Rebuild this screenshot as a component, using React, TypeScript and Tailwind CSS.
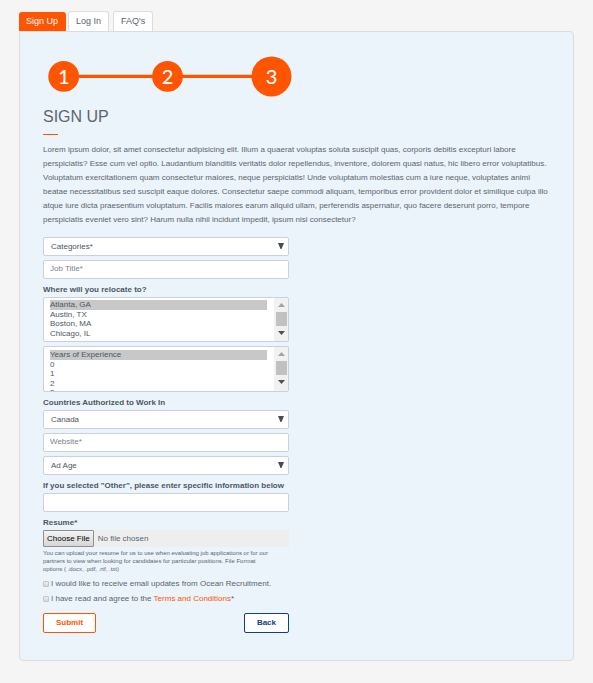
import { useId, type ReactNode } from "react";

const fieldBox =
  "block w-full rounded-[2px] border border-[#c8d1dc] bg-white text-[8px] text-[#4d5763] outline-none focus:border-[#ff5500]";

function Label({ htmlFor, children }: { htmlFor: string; children: ReactNode }) {
  return (
    <label htmlFor={htmlFor} className="mt-[5px] mb-px block text-[8px] leading-3 font-bold text-[#4d5763]">
      {children}
    </label>
  );
}

function Dropdown({ id, label, options }: { id?: string; label?: string; options: string[] }) {
  return (
    <div className="relative">
      <select id={id} aria-label={label} className={`${fieldBox} h-[19px] appearance-none pl-[7px] pr-5`}>
        {options.map((option) => (
          <option key={option}>{option}</option>
        ))}
      </select>
      <svg viewBox="0 0 6 6" className="pointer-events-none absolute top-[6px] right-[5px] size-[6px]" aria-hidden="true">
        <path d="M0 0H6L3.5 6H2.5Z" fill="#444c54" />
      </svg>
    </div>
  );
}

function TextField({ id, label, placeholder }: { id?: string; label?: string; placeholder?: string }) {
  return (
    <input
      id={id}
      type="text"
      aria-label={label}
      placeholder={placeholder}
      className={`${fieldBox} h-[19px] px-[6px] pb-[2px] placeholder:text-[#7b838c]`}
    />
  );
}

function ListBox({
  id,
  label,
  options,
  className,
}: {
  id?: string;
  label?: string;
  options: string[];
  className: string;
}) {
  return (
    <div className="flex w-full overflow-hidden rounded-[2px] border border-[#c8d1dc] bg-white">
      <select
        id={id}
        aria-label={label}
        multiple
        size={4}
        defaultValue={[options[0]]}
        className={`${className} min-w-0 flex-1 overflow-y-auto bg-transparent pr-[7px] pl-[6px] text-[8px] text-[#4d5763] outline-none [scrollbar-width:none]`}
      >
        {options.map((option) => (
          <option
            key={option}
            className="p-0 [-webkit-text-fill-color:#4d5763] checked:bg-[linear-gradient(#c8c8c8,#c8c8c8)]"
          >
            {option}
          </option>
        ))}
      </select>
      <div className="flex w-[14px] flex-col items-center bg-[#f1f1f1] pt-[5px]" aria-hidden="true">
        <svg viewBox="0 0 7 4" className="h-1 w-[7px]">
          <path d="M3.5 0L7 4H0Z" fill="#a3a3a3" />
        </svg>
        <div className="mt-[5px] h-[14px] w-[11px] bg-[#c1c1c1]" />
        <svg viewBox="0 0 7 4" className="mt-[5px] h-1 w-[7px]">
          <path d="M0 0H7L3.5 4Z" fill="#505050" />
        </svg>
      </div>
    </div>
  );
}

function CheckRow({ children }: { children: ReactNode }) {
  const id = useId();
  return (
    <div className="flex items-center gap-[2px] text-[8px] leading-[15px] text-[#5b6570]">
      <input
        id={id}
        type="checkbox"
        className="size-[6px] appearance-none rounded-[1px] border border-[#c3c6ca] bg-linear-to-b from-[#eeeeee] to-[#d5d5d5] checked:bg-[#ff5500] checked:bg-none"
      />
      <label htmlFor={id}>{children}</label>
    </div>
  );
}

function Steps() {
  return (
    <svg viewBox="0 0 244 42" className="ml-[5px] block h-[42px] w-[244px]" role="img" aria-label="Step 3 of 3">
      <path d="M16 20.4H224" stroke="#ff5500" strokeWidth="3.3" />
      <circle cx="15.7" cy="20.4" r="15.4" fill="#ff5500" />
      <circle cx="119.5" cy="20.4" r="15.4" fill="#ff5500" />
      <circle cx="223.5" cy="20.4" r="20" fill="#ff5500" />
      <g fill="#fff" stroke="#fff" strokeWidth="0.1" textAnchor="middle" className="font-['Lato',sans-serif] text-[20px]">
        <text x="15.7" y="27.6">1</text>
        <text x="119.5" y="27.6">2</text>
        <text x="223.5" y="27.6">3</text>
      </g>
    </svg>
  );
}

const tab = "rounded-t-[3px] text-[9px]";
const idleTab = "h-5 border border-b-0 border-[#dddddd] bg-white px-[7px] text-[#5b6570]";

export default function App() {
  return (
    <div className="min-h-screen bg-[#f5f5f5] px-[19px] pt-[11px] pb-[22px] font-['Liberation_Sans',Arial,sans-serif]">
      <nav className="flex items-end">
        <button type="button" className={`${tab} mr-[2px] h-[19px] bg-[#ff5500] pr-2 pl-[7px] text-white`}>
          Sign Up
        </button>
        <button type="button" className={`${tab} ${idleTab} mr-1`}>
          Log In
        </button>
        <button type="button" className={`${tab} ${idleTab}`}>
          FAQ's
        </button>
      </nav>

      <main className="rounded-b-[4px] rounded-tr-[4px] border border-[#dcdcdc] bg-[#ebf3fb] px-[23px] pt-6 pb-[27px]">
        <Steps />
        <h1 className="mt-2 text-[16px] leading-[22px] text-[#5b6570]">SIGN UP</h1>
        <div className="mt-[6px] h-px w-[15px] bg-[#ff5500]" />
        <p className="mt-2 text-[8px] leading-[14px] text-[#5b6570]">
          Lorem ipsum dolor, sit amet consectetur adipisicing elit. Illum a quaerat voluptas soluta suscipit quas,
          corporis debitis excepturi labore perspiciatis? Esse cum vel optio. Laudantium blanditiis veritatis dolor
          repellendus, inventore, dolorem quasi natus, hic libero error voluptatibus. Voluptatum exercitationem quam
          consectetur maiores, neque perspiciatis! Unde voluptatum molestias cum a iure neque, voluptates animi beatae
          necessitatibus sed suscipit eaque dolores. Consectetur saepe commodi aliquam, temporibus error provident
          dolor et similique culpa illo atque iure dicta praesentium voluptatum. Facilis maiores earum aliquid ullam,
          perferendis aspernatur, quo facere deserunt porro, tempore perspiciatis eveniet vero sint? Harum nulla nihil
          incidunt impedit, ipsum nisi consectetur?
        </p>

        <form className="mt-[10px] w-full max-w-[246px]" onSubmit={(event) => event.preventDefault()}>
          <div className="flex flex-col gap-1">
            <Dropdown label="Categories" options={["Categories*", "Engineering", "Marketing", "Sales"]} />
            <TextField label="Job Title" placeholder="Job Title*" />
          </div>

          <Label htmlFor="relocate">Where will you relocate to?</Label>
          <div className="flex flex-col gap-1">
            <ListBox
              id="relocate"
              className="mt-[2px] mb-[3px] h-[38px]"
              options={["Atlanta, GA", "Austin, TX", "Boston, MA", "Chicago, IL", "Dallas, TX", "Denver, CO"]}
            />
            <ListBox
              label="Years of Experience"
              className="mt-[3px] h-[41px]"
              options={["Years of Experience", "0", "1", "2", "3", "4", "5"]}
            />
          </div>

          <Label htmlFor="countries">Countries Authorized to Work In</Label>
          <div className="flex flex-col gap-1">
            <Dropdown id="countries" options={["Canada", "United States"]} />
            <TextField label="Website" placeholder="Website*" />
            <Dropdown label="How did you hear about us" options={["Ad Age", "Other"]} />
          </div>

          <Label htmlFor="other">If you selected "Other", please enter specific information below</Label>
          <TextField id="other" />

          <Label htmlFor="resume">Resume*</Label>
          <input
            id="resume"
            type="file"
            className="block h-[17px] w-full bg-[#eeeeee] text-[8px] leading-[15px] text-[#5b6570] file:mr-1 file:h-[17px] file:rounded-[1px] file:border file:border-solid file:border-[#8f8f8f] file:bg-linear-to-b file:from-[#f4f4f4] file:to-[#d6d6d6] file:px-[3px] file:text-[8px] file:text-black"
          />
          <p className="mt-[2px] mb-[3px] pr-4 text-[6px] leading-2 text-[#5b6570]">
            You can upload your resume for us to use when evaluating job applications or for our partners to view when
            looking for candidates for particular positions. File Format options ( .docx, .pdf, .rtf, .txt)
          </p>

          <CheckRow>I would like to receive email updates from Ocean Recruitment.</CheckRow>
          <CheckRow>
            I have read and agree to the{" "}
            <a href="#terms" className="text-[#ff5500]">
              Terms and Conditions
            </a>
            *
          </CheckRow>

          <div className="mt-[7px] flex justify-between text-[8px] font-bold">
            <button type="submit" className="h-5 rounded-[2px] border border-[#ff5500] bg-white px-3 text-[#ff5500]">
              Submit
            </button>
            <button type="button" className="h-5 rounded-[2px] border border-[#0f3f87] bg-white px-3 text-[#0f3f87]">
              Back
            </button>
          </div>
        </form>
      </main>
    </div>
  );
}
